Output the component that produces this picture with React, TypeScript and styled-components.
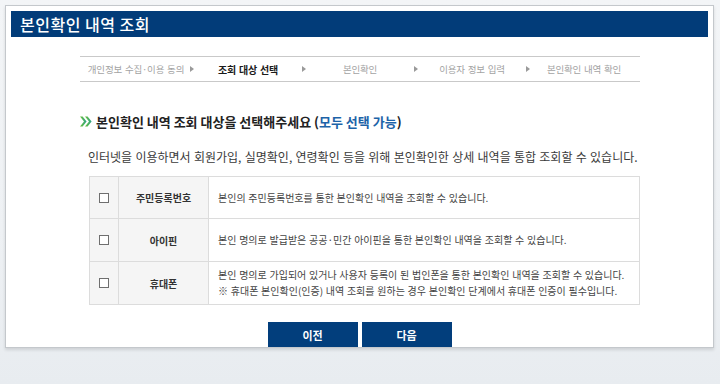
import React from 'react';
import styled, { createGlobalStyle } from 'styled-components';

const GlobalStyle = createGlobalStyle`
  html, body {
    margin: 0;
    padding: 0;
  }
  body {
    width: 720px;
    height: 384px;
    overflow: hidden;
    background: linear-gradient(#f3f5f7 0%, #eef1f4 60%, #e8ecf0 100%);
    font-family: 'Noto Sans CJK KR', 'Noto Sans', sans-serif;
  }
`;

const Panel = styled.div`
  box-sizing: border-box;
  width: 709px;
  height: 343px;
  margin: 5px 0 0 5px;
  padding: 5px 5px 0;
  background: #fff;
  border: 1px solid #c4c8cc;
  box-shadow: 0 2px 3px rgba(0, 0, 0, 0.12);
  display: flex;
  flex-direction: column;
`;

const TitleBar = styled.h1`
  margin: 0;
  height: 26px;
  padding: 0 9px;
  display: flex;
  align-items: center;
  background: #023c79;
  color: #fff;
  font-size: 16px;
  font-weight: 500;
  letter-spacing: 0.5px;
`;

const Content = styled.div`
  width: 560px;
  margin-left: 69px;
  display: flex;
  flex-direction: column;
`;

const Steps = styled.ol`
  list-style: none;
  margin: 19px 0 0;
  padding: 0;
  height: 26px;
  box-sizing: border-box;
  border-top: 1px solid #c9c9c9;
  border-bottom: 1px solid #c9c9c9;
  display: grid;
  grid-template-columns: repeat(5, 1fr);
`;

const Step = styled.li<{ $active?: boolean; $last?: boolean }>`
  position: relative;
  display: flex;
  align-items: center;
  justify-content: center;
  font-size: ${(p) => (p.$active ? '10px' : '9.5px')};
  letter-spacing: -0.2px;
  word-spacing: 1px;
  color: ${(p) => (p.$active ? '#1a1a1a' : '#a3a3a3')};
  font-weight: ${(p) => (p.$active ? 700 : 400)};

  &::after {
    content: '';
    display: ${(p) => (p.$last ? 'none' : 'block')};
    position: absolute;
    right: -2px;
    top: 50%;
    margin-top: -3px;
    border-left: 4px solid #9a9a9a;
    border-top: 3px solid transparent;
    border-bottom: 3px solid transparent;
  }
`;

const Heading = styled.h2`
  margin: 30px 0 0;
  display: flex;
  align-items: center;
  gap: 4px;
  height: 18px;
  font-size: 13px;
  font-weight: 700;
  color: #222;

  em {
    font-style: normal;
    color: #1d63a8;
  }
`;

const Lead = styled.p`
  margin: 19px 0 0 8px;
  height: 16px;
  line-height: 16px;
  font-size: 12px;
  color: #3a3a3a;
  word-spacing: 0.6px;
  white-space: nowrap;
`;

const Table = styled.table`
  margin: 11px 0 0 9px;
  width: 551px;
  border-collapse: collapse;
  table-layout: fixed;
  border: 1px solid #dcdcdc;
`;

const Row = styled.tr<{ $height: number }>`
  height: ${(p) => p.$height}px;
`;

const CheckCell = styled.td`
  width: 28px;
  padding: 0;
  background: #f5f5f5;
  border: 1px solid #dcdcdc;
  text-align: center;
  vertical-align: middle;
`;

const LabelCell = styled.th`
  width: 89px;
  padding: 0;
  background: #f5f5f5;
  border: 1px solid #dcdcdc;
  font-size: 10px;
  font-weight: 700;
  color: #333;
`;

const DescCell = styled.td`
  padding: 0 0 0 9px;
  border: 1px solid #dcdcdc;
  font-size: 10px;
  line-height: 16px;
  color: #444;
  word-spacing: 0.5px;
  white-space: nowrap;
`;

const Check = styled.input.attrs({ type: 'checkbox' })`
  appearance: none;
  display: block;
  margin: 0 auto;
  width: 10px;
  height: 10px;
  box-sizing: border-box;
  border: 1px solid #6f6f6f;
  background: #fff;
  border-radius: 0;
`;

const Buttons = styled.div`
  margin-top: auto;
  display: flex;
  justify-content: center;
  gap: 4px;
`;

const Button = styled.button`
  width: 90px;
  height: 25px;
  border: none;
  background: #023e7c;
  color: #fff;
  font-family: inherit;
  font-size: 11px;
  font-weight: 700;
  cursor: pointer;
`;

const Chevrons = () => (
  <svg width="12" height="11" viewBox="0 0 12 11">
    <defs>
      <linearGradient id="chev" x1="0" y1="0" x2="1" y2="0">
        <stop offset="0" stopColor="#6cc036" />
        <stop offset="1" stopColor="#2ba38a" />
      </linearGradient>
    </defs>
    <path d="M0 0.5h2.6l4 5-4 5H0l4-5z" fill="url(#chev)" />
    <path d="M5 0.5h2.6l4 5-4 5H5l4-5z" fill="url(#chev)" />
  </svg>
);

const steps = ['개인정보 수집·이용 동의', '조회 대상 선택', '본인확인', '이용자 정보 입력', '본인확인 내역 확인'];

const rows = [
  { label: '주민등록번호', h: 42, desc: ['본인의 주민등록번호를 통한 본인확인 내역을 조회할 수 있습니다.'] },
  { label: '아이핀', h: 43, desc: ['본인 명의로 발급받은 공공·민간 아이핀을 통한 본인확인 내역을 조회할 수 있습니다.'] },
  {
    label: '휴대폰',
    h: 43,
    desc: [
      '본인 명의로 가입되어 있거나 사용자 등록이 된 법인폰을 통한 본인확인 내역을 조회할 수 있습니다.',
      '※ 휴대폰 본인확인(인증) 내역 조회를 원하는 경우 본인확인 단계에서 휴대폰 인증이 필수입니다.',
    ],
  },
];

const App = () => {
  return (
    <>
      <GlobalStyle />
      <Panel>
        <TitleBar>본인확인 내역 조회</TitleBar>
        <Content>
          <Steps>
            {steps.map((s, i) => (
              <Step key={s} $active={i === 1} $last={i === steps.length - 1}>
                {s}
              </Step>
            ))}
          </Steps>
          <Heading>
            <Chevrons />
            <span>
              본인확인 내역 조회 대상을 선택해주세요 (<em>모두 선택 가능</em>)
            </span>
          </Heading>
          <Lead>인터넷을 이용하면서 회원가입, 실명확인, 연령확인 등을 위해 본인확인한 상세 내역을 통합 조회할 수 있습니다.</Lead>
          <Table>
            <tbody>
              {rows.map((r) => (
                <Row key={r.label} $height={r.h}>
                  <CheckCell>
                    <Check aria-label={r.label} />
                  </CheckCell>
                  <LabelCell>{r.label}</LabelCell>
                  <DescCell>
                    {r.desc.map((d) => (
                      <div key={d}>{d}</div>
                    ))}
                  </DescCell>
                </Row>
              ))}
            </tbody>
          </Table>
        </Content>
        <Buttons>
          <Button>이전</Button>
          <Button>다음</Button>
        </Buttons>
      </Panel>
    </>
  );
};

export default App;
